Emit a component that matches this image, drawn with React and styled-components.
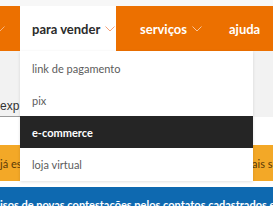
import styled, { createGlobalStyle } from "styled-components";

const GlobalStyle = createGlobalStyle`
  body {
    margin: 0;
    background: #f4f4f4;
    font-family: Lato, "Liberation Sans", sans-serif;
    overflow: hidden;
  }
`;

const Page = styled.div`
  position: relative;
  width: 273px;
  height: 206px;
  overflow: hidden;
  background: #fff;
`;

const TopStrip = styled.div`
  height: 6px;
  background: #f7f7f7;
`;

const NavBar = styled.nav`
  display: flex;
  height: 45px;
  background: #ec7000;
`;

const NavItem = styled.div`
  display: flex;
  align-items: center;
  gap: 5px;
  padding: 0 ${(p) => p.$pad || 0}px;
  width: ${(p) => (p.$width ? `${p.$width}px` : "auto")};
  box-sizing: border-box;
  background: ${(p) => (p.$active ? "#fff" : "transparent")};
  color: ${(p) => (p.$active ? "#2b2b2b" : "#fff")};
  font-size: 13px;
  font-weight: 700;
  white-space: nowrap;
`;

const Chevron = ({ color, offset = 0 }) => (
  <svg width="10" height="6" viewBox="0 0 10 6" style={{ marginLeft: offset, flex: "none" }}>
    <path d="M0.5 0.5 L5 5 L9.5 0.5" fill="none" stroke={color} strokeWidth="1" />
  </svg>
);

const SearchBand = styled.div`
  height: 66px;
  background: #f2f2f2;
  display: flex;
  align-items: flex-end;
`;

const SearchInput = styled.div`
  width: 200px;
  padding-bottom: 3px;
  border-bottom: 1px solid #9a9a9a;
  font-family: "Liberation Sans", sans-serif;
  font-size: 12px;
  color: #333;
  white-space: nowrap;
`;

const Gap = styled.div`
  height: ${(p) => p.$h}px;
  background: #fff;
`;

const Banner = styled.div`
  display: flex;
  align-items: center;
  height: 36px;
  background: #f3a827;
  color: #5b3a06;
  font-size: 11px;
  white-space: nowrap;
  overflow: hidden;
`;

const BannerText = styled.span`
  flex: 0 0 ${(p) => p.$w || "auto"};
  overflow: hidden;
`;

const InfoBar = styled.div`
  height: 19px;
  background: #0e69b0;
  color: #fff;
  font-size: 11px;
  font-weight: 700;
  padding-top: 11px;
  white-space: nowrap;
  overflow: hidden;
  text-decoration: underline;
`;

const Dropdown = styled.ul`
  position: absolute;
  left: 20px;
  top: 51px;
  width: 233px;
  margin: 0;
  padding: 1px 0 1px;
  list-style: none;
  background: #fff;
  box-shadow: 0 1px 3px rgba(0, 0, 0, 0.12);
`;

const DropItem = styled.li`
  display: flex;
  align-items: center;
  height: 32px;
  padding-left: 12px;
  font-size: 11px;
  background: ${(p) => (p.$active ? "#252525" : "#fff")};
  color: ${(p) => (p.$active ? "#fff" : "#5c5c5c")};
  font-weight: ${(p) => (p.$active ? 700 : 400)};
`;

const items = ["link de pagamento", "pix", "e-commerce", "loja virtual"];

export default function App() {
  return (
    <>
      <GlobalStyle />
      <Page>
        <TopStrip />
        <NavBar>
          <NavItem $width={20}>
            <Chevron color="#f7b27a" offset={-5} />
          </NavItem>
          <NavItem $active $width={96} $pad={12}>
            para vender
            <Chevron color="#f5a27a" />
          </NavItem>
          <NavItem $pad={24} style={{ paddingRight: 27 }}>
            serviços
            <Chevron color="#f7c49a" />
          </NavItem>
          <NavItem>ajuda</NavItem>
        </NavBar>
        <SearchBand>
          <SearchInput>exp</SearchInput>
        </SearchBand>
        <Gap $h={28} />
        <Banner>
          <BannerText $w="243px">já está</BannerText>
          <BannerText>mais serviços</BannerText>
        </Banner>
        <Gap $h={6} />
        <InfoBar>isos de novas contestações pelos contatos cadastrados em</InfoBar>
        <Dropdown>
          {items.map((label) => (
            <DropItem key={label} $active={label === "e-commerce"}>
              {label}
            </DropItem>
          ))}
        </Dropdown>
      </Page>
    </>
  );
}
